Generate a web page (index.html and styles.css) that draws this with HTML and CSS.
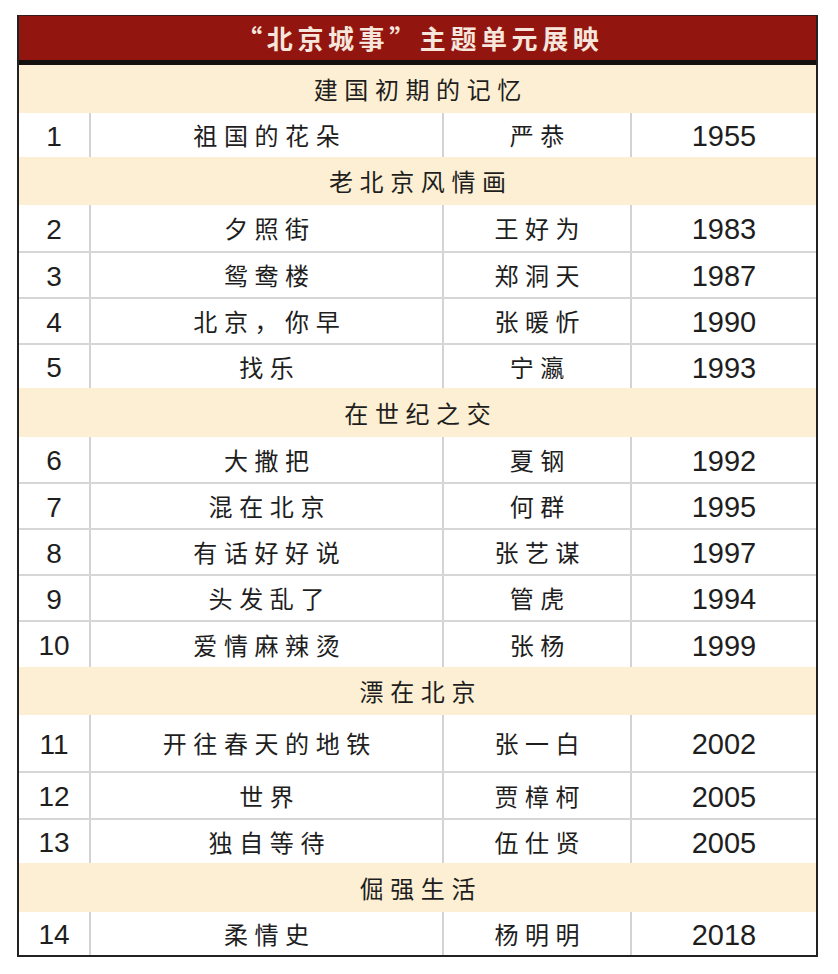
FILE: index.html
```html
<!DOCTYPE html>
<html lang="zh-CN">
<head>
<meta charset="utf-8">
<title>北京城事</title>
<link rel="stylesheet" href="styles.css">
</head>
<body>
<div class="sheet">
  <div class="title">“北京城事”主题单元展映</div>

  <div class="section h48">建国初期的记忆</div>
  <div class="row h44"><div class="c num">1</div><div class="c zh">祖国的花朵</div><div class="c zh">严恭</div><div class="c yr">1955</div></div>

  <div class="section h48">老北京风情画</div>
  <div class="row h46"><div class="c num">2</div><div class="c zh">夕照街</div><div class="c zh">王好为</div><div class="c yr">1983</div></div>
  <div class="row h46"><div class="c num">3</div><div class="c zh">鸳鸯楼</div><div class="c zh">郑洞天</div><div class="c yr">1987</div></div>
  <div class="row h46"><div class="c num">4</div><div class="c zh">北京，你早</div><div class="c zh">张暖忻</div><div class="c yr">1990</div></div>
  <div class="row h45"><div class="c num">5</div><div class="c zh">找乐</div><div class="c zh">宁瀛</div><div class="c yr">1993</div></div>

  <div class="section h49">在世纪之交</div>
  <div class="row h45"><div class="c num">6</div><div class="c zh">大撒把</div><div class="c zh">夏钢</div><div class="c yr">1992</div></div>
  <div class="row h46"><div class="c num">7</div><div class="c zh">混在北京</div><div class="c zh">何群</div><div class="c yr">1995</div></div>
  <div class="row h46"><div class="c num">8</div><div class="c zh">有话好好说</div><div class="c zh">张艺谋</div><div class="c yr">1997</div></div>
  <div class="row h46"><div class="c num">9</div><div class="c zh">头发乱了</div><div class="c zh">管虎</div><div class="c yr">1994</div></div>
  <div class="row h47"><div class="c num">10</div><div class="c zh">爱情麻辣烫</div><div class="c zh">张杨</div><div class="c yr">1999</div></div>

  <div class="section h48">漂在北京</div>
  <div class="row h56"><div class="c num">11</div><div class="c zh">开往春天的地铁</div><div class="c zh">张一白</div><div class="c yr">2002</div></div>
  <div class="row h47"><div class="c num">12</div><div class="c zh">世界</div><div class="c zh">贾樟柯</div><div class="c yr">2005</div></div>
  <div class="row h45"><div class="c num">13</div><div class="c zh">独自等待</div><div class="c zh">伍仕贤</div><div class="c yr">2005</div></div>

  <div class="section h49">倔强生活</div>
  <div class="row h43"><div class="c num">14</div><div class="c zh">柔情史</div><div class="c zh">杨明明</div><div class="c yr">2018</div></div>
</div>
</body>
</html>
```

FILE: styles.css
```css
html, body {
  margin: 0;
  padding: 0;
  background: #ffffff;
}

body {
  font-family: "Noto Sans CJK SC", "Liberation Sans", sans-serif;
  color: #1e1e1e;
}

.sheet {
  margin: 15px 0 0 17px;
  width: 801px;
  box-sizing: border-box;
  border-left: 2px solid #222222;
  border-right: 2px solid #222222;
  border-bottom: 2px solid #222222;
  border-top: 1px solid #3a1a18;
}

.title {
  height: 44px;
  background: #93150f;
  border-bottom: 5px solid #141010;
  color: #f6e6dc;
  font-size: 26px;
  font-weight: 700;
  letter-spacing: 4.6px;
  padding-left: 4.6px;
  display: flex;
  align-items: center;
  justify-content: center;
  line-height: 1;
}

.section {
  background: #fdefd3;
  display: flex;
  align-items: center;
  justify-content: center;
  font-size: 24px;
  letter-spacing: 6.6px;
  padding-left: 6.6px;
  line-height: 1;
  box-sizing: border-box;
}

.row {
  display: grid;
  grid-template-columns: 72px 353px 188px 1fr;
  background: #ffffff;
  box-sizing: border-box;
}

.row + .row {
  border-top: 2px solid #d6d6d6;
}

.c {
  display: flex;
  align-items: center;
  justify-content: center;
  box-sizing: border-box;
  line-height: 1;
}

.c:not(:last-child) {
  border-right: 2px solid #d3d3d3;
}

.num, .yr {
  font-family: "Liberation Sans", Arial, sans-serif;
  font-size: 29px;
  padding-top: 3px;
}

.num {
  font-size: 28px;
}

.zh {
  font-size: 24px;
  letter-spacing: 6.6px;
  padding-left: 6.6px;
}

.h43 { height: 43px; }
.h44 { height: 44px; }
.h45 { height: 45px; }
.h46 { height: 46px; }
.h47 { height: 47px; }
.h48 { height: 48px; }
.h49 { height: 49px; }
.h56 { height: 56px; }
```
